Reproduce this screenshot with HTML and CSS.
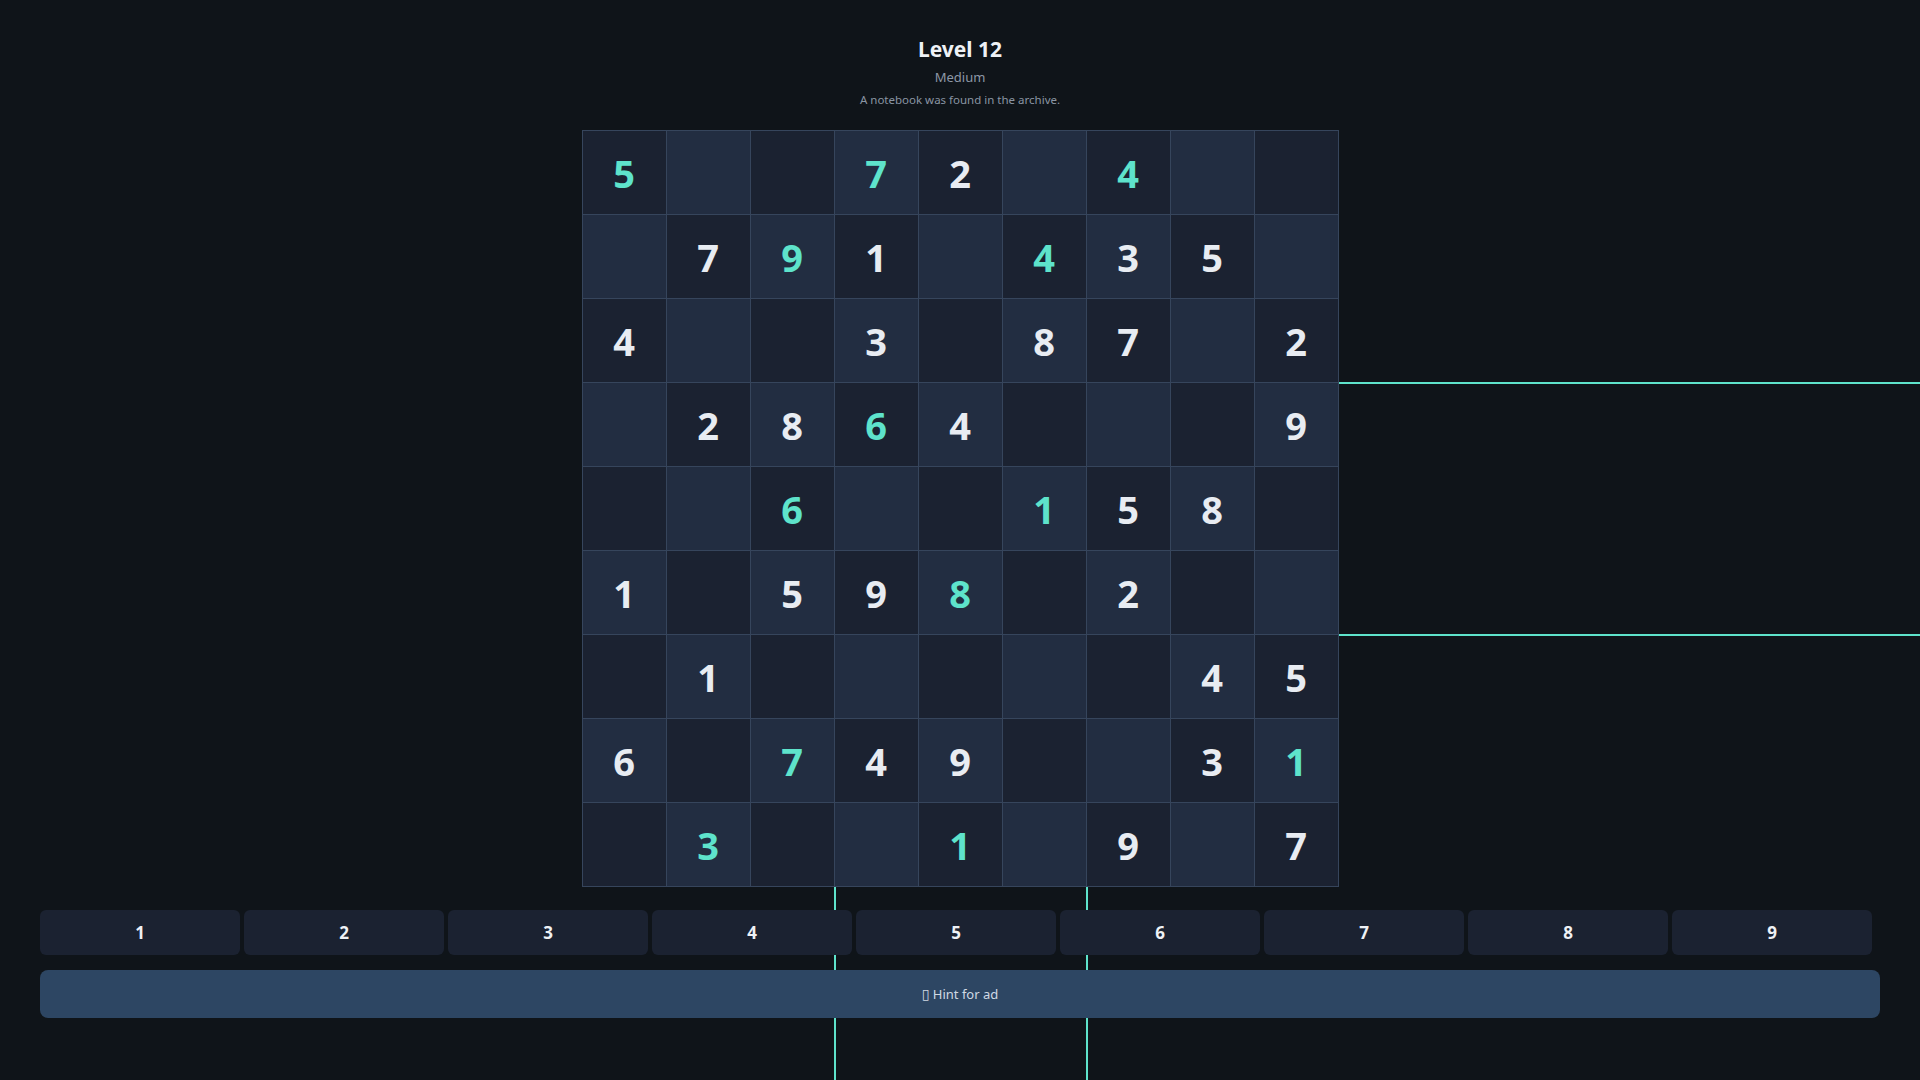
FILE: index.html
```html
<!DOCTYPE html>
<html lang="en">
<head>
<meta charset="utf-8">
<title>Level 12</title>
<link rel="stylesheet" href="styles.css">
</head>
<body>
<main class="page">
  <header class="head">
    <h1 class="title">Level 12</h1>
    <div class="difficulty">Medium</div>
    <p class="story">A notebook was found in the archive.</p>
  </header>

  <section class="board-wrap">
    <div class="sep sep-v sep-v1"></div>
    <div class="sep sep-v sep-v2"></div>
    <div class="sep sep-h sep-h1"></div>
    <div class="sep sep-h sep-h2"></div>
    <div class="board" id="board"></div>
  </section>

  <div class="numpad">
    <button class="num">1</button>
    <button class="num">2</button>
    <button class="num">3</button>
    <button class="num">4</button>
    <button class="num">5</button>
    <button class="num">6</button>
    <button class="num">7</button>
    <button class="num">8</button>
    <button class="num">9</button>
  </div>

  <button class="hint"><span class="tofu">▯</span> Hint for ad</button>
</main>
<script src="app.js"></script>
</body>
</html>
```

FILE: app.js
```js
const rows = [
  "5c _ _ 7c 2 _ 4c _ _",
  "_ 7 9c 1 _ 4c 3 5 _",
  "4 _ _ 3 _ 8 7 _ 2",
  "_ 2 8 6c 4 _ _ _ 9",
  "_ _ 6c _ _ 1c 5 8 _",
  "1 _ 5 9 8c _ 2 _ _",
  "_ 1 _ _ _ _ _ 4 5",
  "6 _ 7c 4 9 _ _ 3 1c",
  "_ 3c _ _ 1c _ 9 _ 7"
];
const board = document.getElementById("board");
rows.forEach((row, r) => {
  row.split(" ").forEach((v, c) => {
    const cell = document.createElement("div");
    cell.className = "cell " + ((r + c) % 2 === 0 ? "cell-dark" : "cell-light");
    if (v !== "_") {
      cell.textContent = v[0];
      if (v.length > 1) cell.classList.add("cell-given");
    }
    board.appendChild(cell);
  });
});
```

FILE: styles.css
```css
html, body {
  margin: 0;
  padding: 0;
  overflow: hidden;
  background: #0f1419;
  font-family: "Noto Sans", "Open Sans", sans-serif;
  color: #e5e9f0;
}

.page {
  width: 1920px;
  height: 1080px;
  box-sizing: border-box;
  padding: 35px 40px 0;
  overflow: hidden;
}

.head {
  text-align: center;
}

.title {
  margin: 0;
  font-size: 21px;
  font-weight: 700;
  line-height: 28px;
  color: #eef1f5;
}

.difficulty {
  margin-top: 5px;
  font-size: 13px;
  line-height: 18px;
  color: #8d97a6;
}

.story {
  margin: 6px 0 0;
  font-size: 11.5px;
  line-height: 16px;
  color: #8a94a3;
}

.board-wrap {
  position: relative;
  width: 757px;
  margin: 22px auto 0;
}

.sep {
  position: absolute;
  background: #5ee3cb;
  z-index: 0;
}

.sep-v {
  top: 0;
  width: 2px;
  height: 950px;
}

.sep-v1 { left: 252px; }
.sep-v2 { left: 504px; }

.sep-h {
  left: 0;
  height: 2px;
  width: 1338px;
}

.sep-h1 { top: 252px; }
.sep-h2 { top: 504px; }

.board {
  position: relative;
  z-index: 1;
  display: grid;
  grid-template-columns: repeat(9, 83px);
  grid-auto-rows: 83px;
  gap: 1px;
  padding: 1px;
  background: #36455c;
}

.cell {
  display: flex;
  align-items: center;
  justify-content: center;
  font-size: 38px;
  font-weight: 700;
  color: #e8ecf2;
}

.cell-dark { background: #1b2231; }
.cell-light { background: #222d41; }

.cell-given { color: #5ee3cb; }

.numpad {
  position: relative;
  z-index: 1;
  display: grid;
  grid-template-columns: repeat(9, 200px);
  gap: 4px;
  margin-top: 23px;
}

.num {
  height: 45px;
  border: none;
  border-radius: 6px;
  background: #1b2231;
  color: #eef1f5;
  font-family: inherit;
  font-size: 17px;
  font-weight: 700;
  padding: 0;
}

.hint {
  position: relative;
  z-index: 1;
  display: block;
  width: 100%;
  height: 48px;
  margin-top: 15px;
  border: none;
  border-radius: 8px;
  background: #2d4663;
  color: #d0d9e4;
  font-family: inherit;
  font-size: 13px;
  padding: 0;
}

.tofu {
  font-family: "DejaVu Sans", sans-serif;
  font-size: 14px;
}
```
